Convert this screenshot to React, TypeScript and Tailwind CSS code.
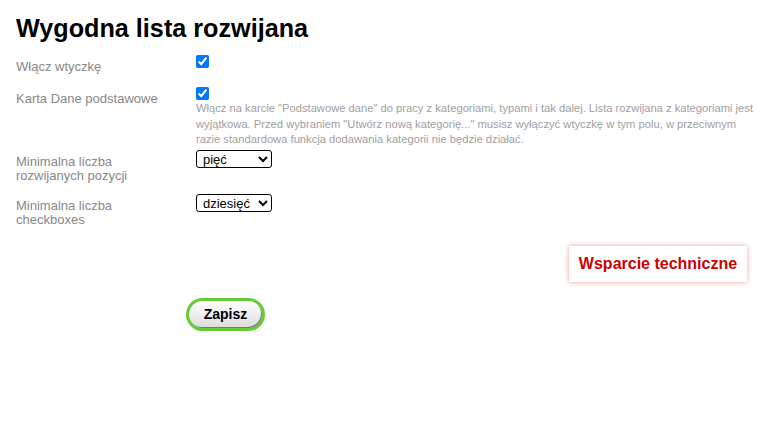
import React from 'react';

const FONT = "font-['Liberation_Sans',Arial,sans-serif]";

const Label = ({ children, pt }: { children: React.ReactNode; pt: string }) => (
  <div className={`w-[196px] shrink-0 pl-4 pr-4 text-[13px] leading-[14px] text-[#888] ${pt}`}>{children}</div>
);

const Select = ({ value, options }: { value: string; options: string[] }) => (
  <select
    defaultValue={value}
    className="h-[18px] w-[76px] rounded-[3px] border border-black bg-white pl-[2px] text-[13px] leading-[15px] text-black"
  >
    {options.map((o) => (
      <option key={o}>{o}</option>
    ))}
  </select>
);

export default function App() {
  const numbers = ['trzy', 'pięć', 'dziesięć', 'piętnaście', 'dwadzieścia'];

  return (
    <div className={`min-h-[423px] w-full bg-white ${FONT}`}>
      <h1 className="pl-4 pt-[12px] text-[25.2px] font-bold leading-[32px] text-black">Wygodna lista rozwijana</h1>

      {/* Włącz wtyczkę */}
      <div className="mt-[11px] flex">
        <Label pt="pt-[5px]">Włącz wtyczkę</Label>
        <input type="checkbox" defaultChecked className="m-0 h-[13px] w-[13px]" />
      </div>

      {/* Karta Dane podstawowe */}
      <div className="mt-[13px] flex">
        <Label pt="pt-[5px]">Karta Dane podstawowe</Label>
        <div className="w-[562px]">
          <input type="checkbox" defaultChecked className="m-0 block h-[13px] w-[13px]" />
          <p className="mt-[1px] text-[11.2px] leading-[15.5px] text-[#a0a0a0]">
            Włącz na karcie "Podstawowe dane" do pracy z kategoriami, typami i tak dalej. Lista rozwijana z kategoriami jest
            wyjątkowa. Przed wybraniem "Utwórz nową kategorię..." musisz wyłączyć wtyczkę w tym polu, w przeciwnym razie
            standardowa funkcja dodawania kategorii nie będzie działać.
          </p>
        </div>
      </div>

      {/* Minimalna liczba rozwijanych pozycji */}
      <div className="mt-[2px] flex">
        <Label pt="pt-[5px]">
          Minimalna liczba
          <br />
          rozwijanych pozycji
        </Label>
        <Select value="pięć" options={numbers} />
      </div>

      {/* Minimalna liczba checkboxes */}
      <div className="mt-[11px] flex">
        <Label pt="pt-[5px]">
          Minimalna liczba
          <br />
          checkboxes
        </Label>
        <Select value="dziesięć" options={numbers} />
      </div>

      <div className="mt-[19px] flex justify-end pr-[25px]">
        <a className="flex h-[36px] w-[178px] items-center justify-center bg-white text-[16px] font-bold text-[#cc0000] shadow-[0_0_5px_rgba(230,0,0,0.4)]">
          Wsparcie techniczne
        </a>
      </div>

      <div className="mt-[16px] pl-[186px]">
        <button className="h-[33px] w-[79px] rounded-full border-[3px] border-[#66cc33] bg-gradient-to-b from-white to-[#dcdcdc] text-[14px] font-bold text-black shadow-[inset_-1px_-1px_0_#777]">
          Zapisz
        </button>
      </div>
    </div>
  );
}
